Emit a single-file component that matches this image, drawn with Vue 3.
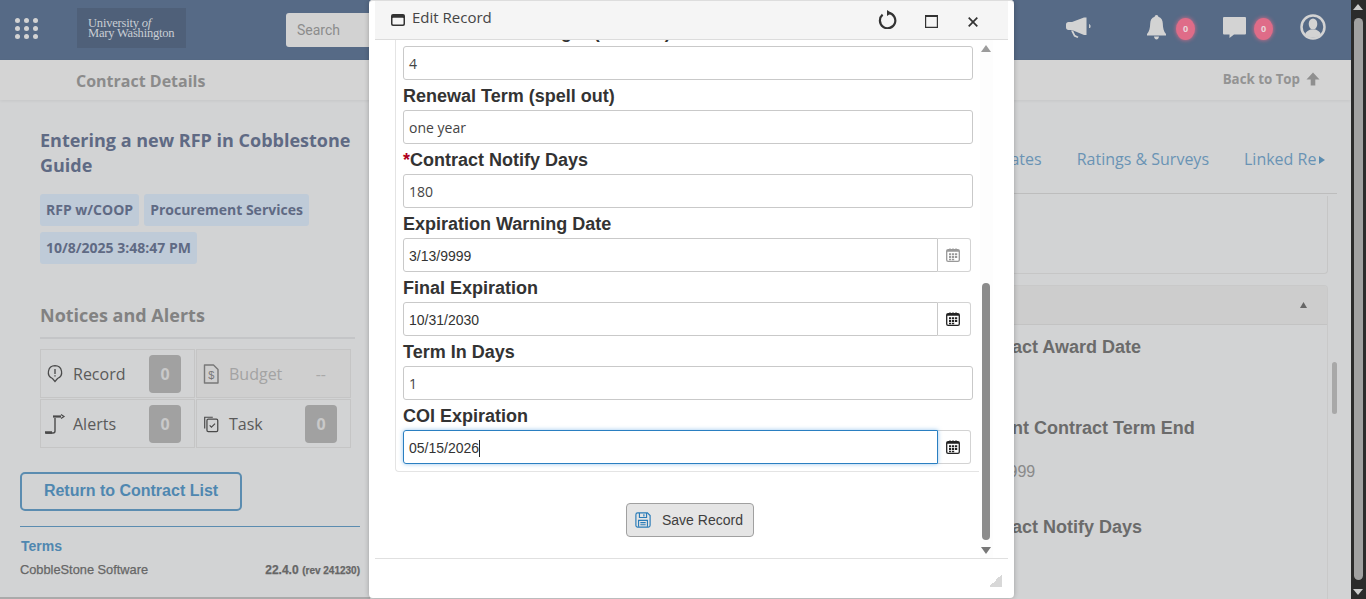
<script setup>
const dots = Array.from({ length: 9 })
const fields = [
  { label: 'Renewal Term Length (months)', value: '4' },
  { label: 'Renewal Term (spell out)', value: 'one year' },
  { label: 'Contract Notify Days', value: '180', required: true },
  { label: 'Expiration Warning Date', value: '3/13/9999', date: true, muted: true },
  { label: 'Final Expiration', value: '10/31/2030', date: true },
  { label: 'Term In Days', value: '1' },
  { label: 'COI Expiration', value: '05/15/2026', date: true, focus: true }
]
const details = [
  { label: 'Contract Award Date', value: '\u00a0', cls: 'd1' },
  { label: 'Current Contract Term End', value: '3/13/9999', cls: 'd2' },
  { label: 'Contract Notify Days', value: '\u00a0', cls: 'd3' }
]
</script>

<template>
  <div class="root">
    <div class="page">
      <header class="topbar">
        <div class="grid-icon"><i v-for="(d, i) in dots" :key="i"></i></div>
        <div class="logo">
          <span>University <em>of</em></span>
          <span>Mary Washington</span>
        </div>
        <div class="search">Search</div>
        <div class="top-icons">
          <svg class="ic-mega" viewBox="0 0 25 21" width="25" height="21">
            <path d="M0 7.500C0 6 1 5 2.500 5H6L18 .6h2.500V18H18L6 13H2.500C1 13 0 12 0 10.500z" fill="#d3d3d3"/>
            <path d="M5 13.500h2l2.200 4.500 3.300 1.800-1 1.200-3.500-1.500z" fill="#d3d3d3"/>
            <path d="M23.500 7.500c.9.800.9 2.700 0 3.500z" fill="#d3d3d3" stroke="#d3d3d3" stroke-width=".8"/>
          </svg>
          <svg class="ic-bell" viewBox="0 0 19 25" width="19" height="25">
            <path d="M9.500 0c1.100 0 1.800.8 1.800 1.800 3.200.8 4.400 3.500 4.500 6.700.1 4.700.9 8 3.200 10.500v1.500H0V19c2.300-2.500 3.100-5.800 3.200-10.500.1-3.200 1.300-5.900 4.500-6.700C7.700.8 8.400 0 9.500 0z" fill="#d3d3d3"/>
            <path d="M7 21.500h5c-.3 2-1.300 3-2.500 3S7.300 23.500 7 21.500z" fill="#d3d3d3"/>
          </svg>
          <span class="badge b1">0</span>
          <svg class="ic-chat" viewBox="0 0 23 21" width="23" height="21">
            <path d="M1 0h21a1 1 0 0 1 1 1v15.500a1 1 0 0 1-1 1H11L6.500 21v-3.500H1a1 1 0 0 1-1-1V1a1 1 0 0 1 1-1z" fill="#d3d3d3"/>
          </svg>
          <span class="badge b2">0</span>
          <svg class="ic-user" viewBox="0 0 26 26" width="26" height="26">
            <circle cx="13" cy="13" r="11.500" fill="none" stroke="#d3d3d3" stroke-width="2.500"/>
            <ellipse cx="13" cy="10" rx="4.300" ry="5.500" fill="#d3d3d3"/>
            <path d="M5 20.500c.8-3 3.500-4 5.500-5h5c2 1 4.700 2 5.500 5-2 2-4.800 3-8 3s-6-1-8-3z" fill="#d3d3d3"/>
          </svg>
        </div>
      </header>

      <div class="subbar">
        <span class="sub-title">Contract Details</span>
        <span class="back">Back to Top
          <svg viewBox="0 0 14 14" width="14" height="14"><path d="M7 .5 13.500 7.500H9.300V13.500H4.700V7.500H.5z" fill="#8f8f8f"/></svg>
        </span>
      </div>

      <main class="main">
        <aside class="side">
          <div class="side-inner">
            <h1 class="rec-title">Entering a new RFP in Cobblestone Guide</h1>
            <div class="tags">
              <span class="tag">RFP w/COOP</span>
              <span class="tag">Procurement Services</span>
              <span class="tag">10/8/2025 3:48:47 PM</span>
            </div>
            <h2 class="notices">Notices and Alerts</h2>
            <div class="cells">
              <div class="cell">
                <svg viewBox="0 0 20 24" width="18" height="20"><path d="M10 2a8 8 0 0 1 3 15.400L10 21l-3-3.600A8 8 0 0 1 10 2z" fill="none" stroke="#4a4a4a" stroke-width="1.500"/><path d="M10 6v6M10 13.500v1.500" stroke="#4a4a4a" stroke-width="1.600"/></svg>
                <span class="cell-name">Record</span><b class="count">0</b>
              </div>
              <div class="cell off">
                <svg viewBox="0 0 18 20" width="18" height="20"><path d="M2.500 1h9L16 5.500V19H2.500z" fill="none" stroke="#6f6f6f" stroke-width="1.400" stroke-linejoin="round"/><text x="9.200" y="15" font-size="11" text-anchor="middle" fill="#6f6f6f" font-family="Liberation Sans">$</text></svg>
                <span class="cell-name">Budget</span><span class="dash">--</span>
              </div>
              <div class="cell">
                <svg class="route" viewBox="0 0 22 22" width="22" height="22"><path d="M11 5v13c0 1.500-1 2-2 2H2" fill="none" stroke="#4a4a4a" stroke-width="1.400"/><path d="M1 19.500h7" stroke="#4a4a4a" stroke-width="2.500"/><path d="M9 3.500h8" stroke="#4a4a4a" stroke-width="2.200"/><path d="M17 1.500l3 2-3 2" fill="none" stroke="#4a4a4a" stroke-width="1.200"/></svg>
                <span class="cell-name">Alerts</span><b class="count">0</b>
              </div>
              <div class="cell">
                <svg viewBox="0 0 20 20" width="18" height="20"><path d="M3 15V2.500h9" fill="none" stroke="#4a4a4a" stroke-width="1.300"/><rect x="5.500" y="4.500" width="12" height="14" rx="1.500" fill="none" stroke="#4a4a4a" stroke-width="1.400"/><path d="M8.500 11.500l2 2 4-4" fill="none" stroke="#4a4a4a" stroke-width="1.300"/></svg>
                <span class="cell-name">Task</span><b class="count">0</b>
              </div>
            </div>
          </div>
          <button class="return">Return to Contract List</button>
          <div class="foot">
            <a class="terms">Terms</a>
            <div class="foot-row">
              <span>CobbleStone Software</span>
              <span class="ver"><b>22.4.0</b> <small>(rev 241230)</small></span>
            </div>
          </div>
        </aside>

        <section class="content">
          <nav class="tabs">
            <span class="tab hide-part">Contract Dates</span>
            <span class="tab">Ratings &amp; Surveys</span>
            <span class="tab clip">Linked Records</span>
            <svg viewBox="0 0 6 8" width="6" height="8"><path d="M0 0 6 4 0 8z" fill="#5b8cb0"/></svg>
          </nav>
          <div class="panel-empty"></div>
          <div class="panel">
            <div class="panel-head"><svg viewBox="0 0 7 6" width="7" height="6"><path d="M3.500 0 7 6H0z" fill="#666"/></svg></div>
            <div class="panel-body">
              <div v-for="d in details" :key="d.label" class="detail" :class="d.cls">
                <div class="d-label">{{ d.label }}</div>
                <div class="d-value">{{ d.value }}</div>
              </div>
            </div>
          </div>
          <div class="inner-thumb"></div>
        </section>
      </main>

      <div class="modal">
        <div class="m-head">
          <svg class="m-ico" viewBox="0 0 14 12" width="14" height="12"><path d="M2 0h10a2 2 0 0 1 2 2v8a2 2 0 0 1-2 2H2a2 2 0 0 1-2-2V2a2 2 0 0 1 2-2z" fill="#333"/><rect x="1.500" y="3.800" width="11" height="6.800" rx=".8" fill="#f5f5f5"/></svg>
          <span class="m-title">Edit Record</span>
          <svg class="m-refresh" viewBox="0 0 19 19" width="19" height="19"><path d="M4.600 4.700A7.700 7.700 0 1 0 10.500 2.900" fill="none" stroke="#333" stroke-width="2.200"/><path d="M9 0v6l4.500-3z" fill="#333"/></svg>
          <svg class="m-max" viewBox="0 0 13 13" width="13" height="13"><path d="M.6.600h11.800v11.800H.6z" fill="none" stroke="#333" stroke-width="1.200"/><path d="M0 0h13v2H0z" fill="#333"/></svg>
          <svg class="m-close" viewBox="0 0 10 10" width="10" height="10"><path d="M.7.700l8.600 8.600M9.300.700.7 9.300" stroke="#333" stroke-width="1.700"/></svg>
        </div>
        <div class="m-body">
          <div class="m-scroll">
            <div class="form-panel">
              <div v-for="f in fields" :key="f.label" class="field">
                <label class="f-label"><span v-if="f.required" class="req">*</span>{{ f.label }}</label>
                <div class="f-row" :class="{ date: f.date, focus: f.focus, muted: f.muted }">
                  <div class="f-input">{{ f.value }}<span v-if="f.focus" class="caret"></span></div>
                  <div v-if="f.date" class="f-cal">
                    <svg viewBox="0 0 14 14" width="14" height="14">
                      <rect x=".7" y="1.700" width="12.600" height="11.600" rx="1.400" fill="none" stroke="currentColor" stroke-width="1.300"/>
                      <path d="M1 2h12v1.800H1zM3.500 .2h1v2h-1zM9.500 .2h1v2h-1zM6.500 .2h1v2h-1z" fill="currentColor"/>
                      <path d="M3 5.200h2.200v2H3zM6 5.200h2.200v2H6zM9 5.200h2.200v2H9zM3 8h2.200v2H3zM6 8h2.200v2H6zM9 8h2.200v2H9zM3 10.700h2.200v1.600H3zM6 10.700h2.200v1.600H6z" fill="currentColor"/>
                    </svg>
                  </div>
                </div>
              </div>
            </div>
            <div class="save-wrap">
              <button class="save">
                <svg viewBox="0 0 18 18" width="16" height="16"><path d="M1 3a2 2 0 0 1 2-2h11l3 3v11a2 2 0 0 1-2 2H3a2 2 0 0 1-2-2z" fill="none" stroke="#2a7cb8" stroke-width="1.300"/><path d="M5 1.200v5h8v-5M10 2.500v2.500" fill="none" stroke="#2a7cb8" stroke-width="1.300"/><path d="M4 16.500V9.500h10v7M6 12h6M6 14.300h6" fill="none" stroke="#2a7cb8" stroke-width="1.300"/></svg>
                <span>Save Record</span>
              </button>
            </div>
          </div>
          <div class="m-bar">
            <i class="up"></i>
            <div class="m-track"><div class="m-thumb"></div></div>
            <i class="down"></i>
          </div>
        </div>
        <div class="m-foot"><i class="resize"></i></div>
      </div>
    </div>

    <div class="browser-bar">
      <i class="up"></i>
      <div class="b-thumb"></div>
      <i class="down"></i>
    </div>
  </div>
</template>

<style>
html, body { margin: 0; height: 100%; overflow: hidden; }
</style>

<style scoped>
* { box-sizing: border-box; }
.root { display: flex; width: 1366px; height: 599px; overflow: hidden; font-family: "Open Sans", sans-serif; background: #d2d3d4; }
.page { position: relative; width: 1351px; flex: none; display: flex; flex-direction: column; height: 599px; }

.topbar { height: 60px; background: #566a86; display: flex; align-items: center; flex: none; }
.grid-icon { margin: -4px 0 0 15px; width: 22px; display: grid; grid-template-columns: repeat(3, 5px); gap: 3px 4px; }
.grid-icon i { width: 5px; height: 5px; border-radius: 50%; background: #d3d3d3; }
.logo { margin: -4px 0 0 40px; width: 109px; height: 40px; background: #4f6079; display: flex; flex-direction: column; justify-content: center; padding-left: 11px; font-family: "Liberation Serif", serif; font-size: 12.500px; line-height: 10.500px; color: #c9ced4; letter-spacing: -.2px; }
.logo em { font-style: italic; }
.search { margin-left: 100px; width: 140px; height: 34px; background: #d2d2d2; border-radius: 3px; padding-left: 11px; font: 14px/34px Roboto, sans-serif; color: #8c8c8c; }
.top-icons { flex: 1; position: relative; height: 60px; }
.top-icons svg, .badge { position: absolute; }
.ic-mega { left: 640px; top: 17px; }
.ic-bell { left: 721px; top: 15px; }
.ic-chat { left: 797px; top: 17px; }
.ic-user { left: 874px; top: 14px; }
.badge { top: 18px; width: 19px; height: 22px; border-radius: 50%; background: #df6c88; box-shadow: 0 0 4px #df6c88; color: #e8d5da; font: 700 9px/22px "Open Sans", sans-serif; text-align: center; }
.b1 { left: 750px; }
.b2 { left: 828px; }

.subbar { height: 40px; background: #d4d4d4; display: flex; align-items: center; justify-content: space-between; padding: 2px 31px 0 76px; flex: none; box-shadow: 0 1px 3px rgba(0,0,0,.06); }
.sub-title { font-size: 16px; font-weight: 700; color: #8b8b8b; }
.back { font-size: 13.300px; font-weight: 700; color: #939393; display: flex; align-items: center; gap: 6px; margin-top: -5px; }

.main { display: flex; flex: 1; min-height: 0; }
.side { width: 370px; padding: 0 10px 0 20px; flex: none; border-bottom: 2px solid #aaa; }
.side-inner { padding: 28px 0 0 20px; }
.rec-title { margin: 0; font-size: 18px; line-height: 25px; font-weight: 700; color: #5f6a84; width: 315px; }
.tags { display: flex; flex-wrap: wrap; gap: 6px 5px; margin-top: 16px; width: 300px; }
.tag { height: 32px; padding: 0 6px; line-height: 32px; background: #bfcbd8; border-radius: 3px; font-size: 14px; font-weight: 700; color: #5f6a84; white-space: nowrap; }
.notices { margin: 39px 0 0; height: 36px; width: 315px; font-size: 18px; font-weight: 700; color: #828282; line-height: 25px; border-bottom: 2px solid #c4c5c7; }
.cells { margin-top: 10px; width: 311px; display: grid; grid-template-columns: 155px 155px; gap: 1px; }
.cell { height: 49px; border: 1px solid #c5c5c5; display: flex; align-items: center; padding: 0 4px 0 5px; font-size: 16px; color: #5a5a5a; position: relative; }
.cell.off { color: #a3a3a3; background: #cfcfcf; }
.cell.off svg { opacity: .9; }
.cell-name { position: absolute; left: 32px; }
.count { position: absolute; right: 13px; top: 5px; width: 32px; height: 38px; background: #a1a1a1; color: #c9c9c9; border-radius: 4px; font-size: 16px; font-weight: 700; line-height: 38px; text-align: center; }
.dash { position: absolute; right: 24px; color: #a9a9a9; }
.route { margin-left: -2px; }
.return { display: block; margin-top: 24px; width: 222px; height: 39px; border: 2px solid #5b8cb0; border-radius: 5px; background: transparent; font: 700 16px "Liberation Sans", sans-serif; color: #4f87b0; padding: 0 0 1px; }
.foot { margin-top: 15px; border-top: 1px solid #5b8cb0; padding-top: 11px; font-family: "Liberation Sans", sans-serif; }
.terms { display: block; margin-left: 1px; font-size: 14px; font-weight: 700; color: #4f87b0; line-height: 17px; }
.foot-row { display: flex; justify-content: space-between; align-items: baseline; margin-top: 7px; font-size: 12.800px; color: #666; -webkit-text-stroke: .25px #666; }
.ver b { font-size: 12px; }
.ver small { font-size: 10px; font-weight: 700; }

.content { flex: 1; position: relative; min-width: 0; padding-top: 37px; padding-right: 14px; }
.tabs { height: 57px; border-bottom: 1px solid #bdbdbd; display: flex; align-items: flex-start; justify-content: flex-end; font-size: 16px; color: #6a93b4; padding: 10px 12px 0 0; position: relative; }
.tab { margin-left: 35px; white-space: nowrap; line-height: 24px; }
.tab.clip { width: 72px; overflow: hidden; }
.tabs svg { margin: 9px 0 0 3px; }
.panel-empty { height: 78px; margin: 2px 9px 0 0; border: 1px solid #c6c6c6; border-top: 0; border-radius: 0 0 4px 4px; }
.panel { margin: 11px 9px 0 0; border: 1px solid #c9c9c9; border-bottom: 0; border-radius: 4px 4px 0 0; height: 320px; overflow: hidden; }
.panel-head { height: 39px; background: #cdcdcd; border-bottom: 1px solid #c3c3c3; display: flex; align-items: center; justify-content: flex-end; padding-right: 20px; }
.panel-body { position: relative; padding-left: 593px; font-family: "Liberation Sans", sans-serif; }
.d-label { font-size: 18px; font-weight: 700; color: #6b6b6b; line-height: 22px; white-space: nowrap; }
.d-value { font-size: 16px; color: #8a8a8a; line-height: 22px; margin-top: 22px; }
.d1 { margin-top: 11px; }
.detail.d2 { margin-top: 15px; }
.detail.d3 { margin-top: 33px; }
.inner-thumb { position: absolute; right: 14px; top: 262px; width: 5px; height: 52px; background: #a8a8a8; border-radius: 3px; }

.modal { position: absolute; left: 369px; top: 0; width: 645px; height: 598px; background: #fff; border-radius: 4px; box-shadow: 0 0 5px rgba(0,0,0,.25), inset 0 1px 0 #ddd; padding: 0 6px; display: flex; flex-direction: column; }
.m-head { height: 39px; flex: none; background: #f5f5f5; border-bottom: 1px solid #dcdcdc; position: relative; display: flex; align-items: center; margin-top: 1px; }
.m-ico { margin-left: 16px; }
.m-title { margin-left: 7px; font-size: 15px; color: #454545; margin-top: -6px; }
.m-refresh { position: absolute; left: 503px; top: 9px; }
.m-max { position: absolute; left: 550px; top: 14px; }
.m-close { position: absolute; left: 593px; top: 16px; }
.m-body { height: 518px; flex: none; display: flex; overflow: hidden; }
.m-scroll { flex: 1; min-width: 0; }
.form-panel { margin: -23px 0 0 20px; width: 584px; height: 455px; border-left: 1px solid #e4e4e4; border-bottom: 1px solid #e4e4e4; border-radius: 0 0 0 4px; padding-left: 7px; }
.field { height: 64px; }
.f-label { display: block; height: 29px; font: 700 18px/30px "Liberation Sans", sans-serif; color: #333; white-space: nowrap; }
.req { color: #b00020; }
.f-row { display: flex; width: 570px; height: 34px; }
.f-input { flex: 1; height: 34px; border: 1px solid #c9c9c9; border-radius: 3px; padding: 0 5px; font: 14px/34px "Open Sans", sans-serif; color: #444; position: relative; }
.date .f-input { border-radius: 3px 0 0 3px; font-family: "Liberation Sans", sans-serif; color: #333; }
.f-cal { width: 33px; margin-right: 2px; padding-right: 2px; border: 1px solid #d3d3d3; border-left: 0; border-radius: 0 3px 3px 0; display: flex; align-items: center; justify-content: center; color: #222; }
.muted .f-cal { color: #999; }
.focus .f-input { border-color: #2a7fc1; box-shadow: 0 0 4px rgba(66,150,220,.55); }
.caret { display: inline-block; width: 1px; height: 17px; background: #222; vertical-align: -4px; }
.save-wrap { display: flex; margin: 31px 0 0; padding-left: 251px; width: 612px; }
.save { width: 128px; height: 34px; border: 1px solid #a0a0a0; border-radius: 4px; background: #e5e5e5; display: flex; align-items: center; padding: 0 0 0 8px; gap: 11px; font: 14px "Liberation Sans", sans-serif; color: #3e3e3e; }
.m-bar { width: 13px; margin-right: 15px; position: relative; background: #fdfdfd; flex: none; }
.m-track { position: absolute; top: 243px; left: 2px; width: 8px; height: 257px; }
.m-thumb { width: 8px; height: 100%; background: #8b8b8b; border-radius: 4px; }
.m-bar .up { position: absolute; top: 5px; left: 1px; border: 5px solid transparent; border-top: 0; border-bottom: 7px solid #9b9b9b; }
.m-bar .down { position: absolute; top: 507px; left: 1px; border: 5px solid transparent; border-bottom: 0; border-top: 7px solid #777; }
.m-foot { flex: 1; border-top: 1px solid #e0e0e0; position: relative; }
.resize { position: absolute; right: 6px; bottom: 11px; width: 13px; height: 13px; background: linear-gradient(135deg, transparent 50%, #d8d8d8 50%); }

.browser-bar { flex: 1; background: #2b2b2b; position: relative; }
.b-thumb { position: absolute; left: 3px; top: 18px; width: 9px; height: 562px; background: #a1a1a1; border-radius: 5px; }
.browser-bar .up { position: absolute; top: 4px; left: 2px; border: 5px solid transparent; border-top: 0; border-bottom: 6px solid #ccc; }
.browser-bar .down { position: absolute; bottom: 4px; left: 2px; border: 5px solid transparent; border-bottom: 0; border-top: 6px solid #ccc; }
</style>
